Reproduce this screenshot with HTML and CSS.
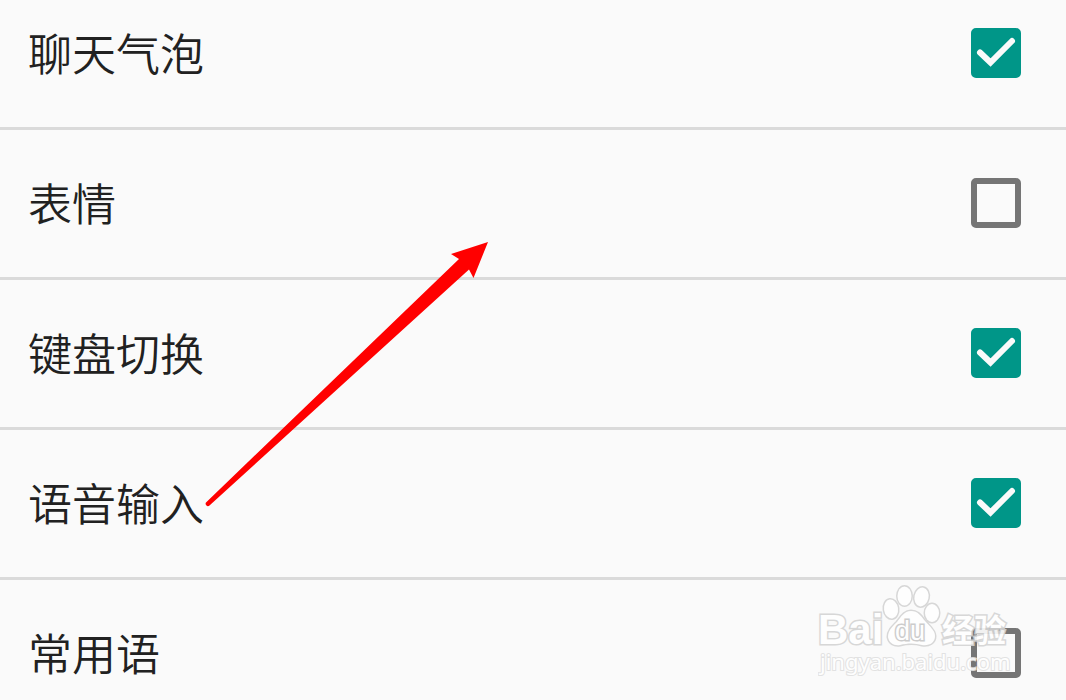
FILE: index.html
```html
<!DOCTYPE html>
<html lang="zh-CN">
<head>
<meta charset="utf-8">
<meta name="viewport" content="width=device-width, initial-scale=1">
<title>键盘设置</title>
<link rel="stylesheet" href="styles.css">
</head>
<body>
<main class="screen">
  <ul class="options">
    <li class="option">
      <label class="option-label" for="bubble">聊天气泡</label>
      <span class="check"><input class="check-box" type="checkbox" id="bubble" checked><svg class="check-mark" viewBox="0 0 50 50" aria-hidden="true"><path d="M9 24.500 19.500 34.500 41 13"/></svg></span>
    </li>
    <li class="option">
      <label class="option-label" for="emoji">表情</label>
      <span class="check"><input class="check-box" type="checkbox" id="emoji"><svg class="check-mark" viewBox="0 0 50 50" aria-hidden="true"><path d="M9 24.500 19.500 34.500 41 13"/></svg></span>
    </li>
    <li class="option">
      <label class="option-label" for="keyboard">键盘切换</label>
      <span class="check"><input class="check-box" type="checkbox" id="keyboard" checked><svg class="check-mark" viewBox="0 0 50 50" aria-hidden="true"><path d="M9 24.500 19.500 34.500 41 13"/></svg></span>
    </li>
    <li class="option">
      <label class="option-label" for="voice">语音输入</label>
      <span class="check"><input class="check-box" type="checkbox" id="voice" checked><svg class="check-mark" viewBox="0 0 50 50" aria-hidden="true"><path d="M9 24.500 19.500 34.500 41 13"/></svg></span>
    </li>
    <li class="option">
      <label class="option-label" for="phrases">常用语</label>
      <span class="check"><input class="check-box" type="checkbox" id="phrases"><svg class="check-mark" viewBox="0 0 50 50" aria-hidden="true"><path d="M9 24.500 19.500 34.500 41 13"/></svg></span>
    </li>
  </ul>
  <svg class="arrow" viewBox="0 0 284 268" aria-hidden="true">
    <path d="M284 2 247 14 255 19 2.500 262A2.200 2.200 0 0 0 5.500 265.500L265 29.500 269.500 38Z"/>
  </svg>
  <svg class="watermark" viewBox="0 0 200 100" aria-hidden="true">
    <g class="mark">
      <ellipse cx="73" cy="24" rx="7" ry="9.500" transform="rotate(-8 73 24)"/>
      <ellipse cx="86.500" cy="11" rx="7" ry="9.500"/>
      <ellipse cx="103.500" cy="12" rx="7" ry="9.500" transform="rotate(12 103.500 12)"/>
      <ellipse cx="114" cy="28" rx="7" ry="9"/>
      <path d="M93 26C86 26 83 32 79 37 73 43 70 46 70 52 71 58 76 61 82 60 90 58 97 58 104 60 111 61 117 58 117 51 117 45 111 41 107 36 103 31 100 26 93 26Z"/>
      <text class="brand" x="0" y="59">Bai</text>
      <text class="brand-small" x="77" y="55">du</text>
      <text class="brand-cn" x="124" y="57">经验</text>
      <text class="site" x="2" y="85">jingyan.baidu.com</text>
    </g>
  </svg>
</main>
</body>
</html>
```
FILE: styles.css
```css
* { box-sizing: border-box; }

body {
  margin: 0;
  background: #fafafa;
  color: #212121;
  font-family: "Noto Sans CJK SC", sans-serif;
}

.screen {
  position: relative;
  height: 100vh;
  overflow: hidden;
}

/* The list is scrolled slightly past its first row. */
.options {
  list-style: none;
  margin: -20px 0 0;
  padding: 0;
}

.option {
  display: flex;
  align-items: center;
  justify-content: space-between;
  min-height: 150px;
  padding: 0 45px 2px 28px;
  border-bottom: 3px solid #dadada;
}

.option-label {
  padding-bottom: 2px;
  font-size: 44px;
  line-height: 64px;
  font-weight: 350;
}

.check {
  display: grid;
  width: 50px;
  height: 50px;
}

.check-box,
.check-mark {
  grid-area: 1 / 1;
  width: 50px;
  height: 50px;
}

.check-box {
  appearance: none;
  margin: 0;
  border: 6px solid #757575;
  border-radius: 5px;
}

.check-box:checked {
  border-color: #009688;
  background: #009688;
}

.check-mark {
  visibility: hidden;
  pointer-events: none;
  fill: none;
  stroke: #fafafa;
  stroke-width: 6;
  stroke-linecap: round;
}

.check-box:checked + .check-mark { visibility: visible; }

.arrow {
  position: absolute;
  left: 204px;
  top: 240px;
  width: 284px;
  height: 268px;
  fill: #f00;
  pointer-events: none;
}

.watermark {
  position: absolute;
  right: 48px;
  bottom: 15px;
  width: 200px;
  height: 100px;
  pointer-events: none;
}

.mark {
  fill: #fff;
  stroke: #d4d4d4;
  stroke-width: 3;
  paint-order: stroke;
  opacity: 0.9;
}

.brand {
  font: bold 42px "Liberation Sans", sans-serif;
}

.brand-small {
  font: 27px "Liberation Sans", sans-serif;
  stroke: #c8c8c8;
}

.brand-cn {
  font: bold 32px "Noto Sans CJK SC", sans-serif;
}

.site {
  font: 22px "Noto Sans", sans-serif;
  stroke: #e0e0e0;
  stroke-width: 2;
}
```
